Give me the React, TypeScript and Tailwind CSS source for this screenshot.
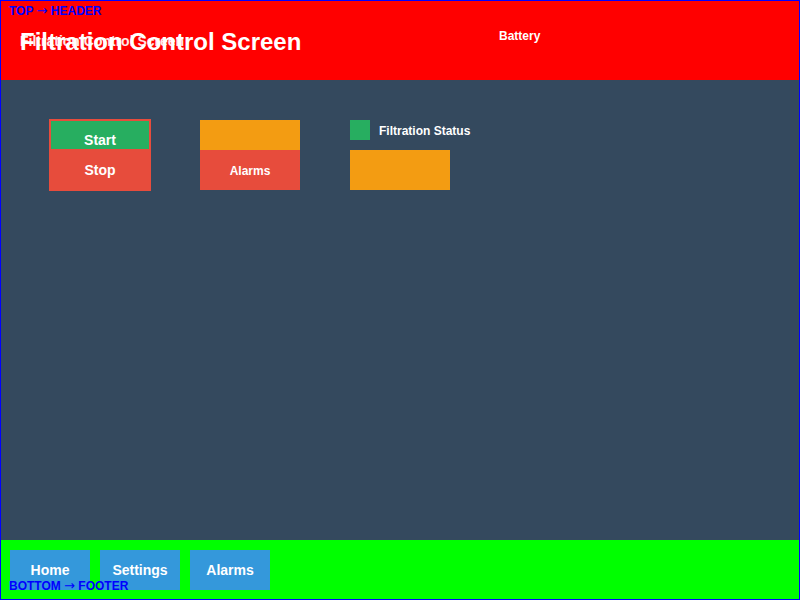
export default function App() {
  return (
    <div
      className="w-[800px] h-[600px] flex flex-col border border-[#0000ff] bg-[#34495e] overflow-hidden"
      style={{ fontFamily: '"Liberation Sans", Arial, sans-serif' }}
    >
      {/* header */}
      <header className="relative h-[79px] shrink-0 bg-[#ff0000] flex items-start">
        <span className="absolute left-[8px] top-[3px] text-[12px] font-bold leading-[14px] text-[#0000ff]">
          TOP <span className="font-['DejaVu_Sans'] font-normal text-[13px]">→</span> HEADER
        </span>
        <h1 className="ml-[19px] mt-[27px] w-[479px] text-[24px] font-bold leading-[28px] text-white">
          Filtration Control Screen
        </h1>
        <span className="absolute left-[19px] top-[32px] text-[14px] font-bold leading-[16px] text-white/90">
          Filtration Control Screen
        </span>
        <span className="mt-[28px] text-[12px] font-bold leading-[14px] text-white">Battery</span>
      </header>

      {/* main */}
      <main className="flex-1 flex items-start pl-[48px] pt-[39px]">
        <div className="w-[102px] bg-[#e74c3c] pt-[2px] px-[2px] flex flex-col">
          <button className="h-[28px] bg-[#27ae60] text-white text-[14px] font-bold leading-[16px] pt-[10px]">
            Start
          </button>
          <button className="h-[42px] text-white text-[14px] font-bold leading-[16px]">Stop</button>
        </div>

        <div className="ml-[49px] mt-[1px] w-[100px] flex flex-col">
          <div className="h-[30px] bg-[#f39c12]" />
          <button className="h-[40px] bg-[#e74c3c] text-white text-[12px] font-bold leading-[14px] pt-[2px]">
            Alarms
          </button>
        </div>

        <div className="ml-[50px] mt-[1px] flex flex-col gap-[10px]">
          <div className="flex items-center gap-[9px]">
            <div className="w-[20px] h-[20px] bg-[#27ae60]" />
            <span className="text-[12px] font-bold leading-[14px] text-white pt-[2px]">Filtration Status</span>
          </div>
          <div className="w-[100px] h-[40px] bg-[#f39c12]" />
        </div>
      </main>

      {/* footer */}
      <footer className="relative h-[59px] shrink-0 bg-[#00ff00] flex items-start gap-[10px] pl-[9px] pt-[10px]">
        {["Home", "Settings", "Alarms"].map((label) => (
          <button
            key={label}
            className="w-[80px] h-[40px] bg-[#3498db] text-white text-[14px] font-bold leading-[16px]"
          >
            {label}
          </button>
        ))}
        <span className="absolute left-[8px] top-[39px] text-[12px] font-bold leading-[14px] text-[#0000ff]">
          BOTTOM <span className="font-['DejaVu_Sans'] font-normal text-[13px]">→</span> FOOTER
        </span>
      </footer>
    </div>
  );
}
